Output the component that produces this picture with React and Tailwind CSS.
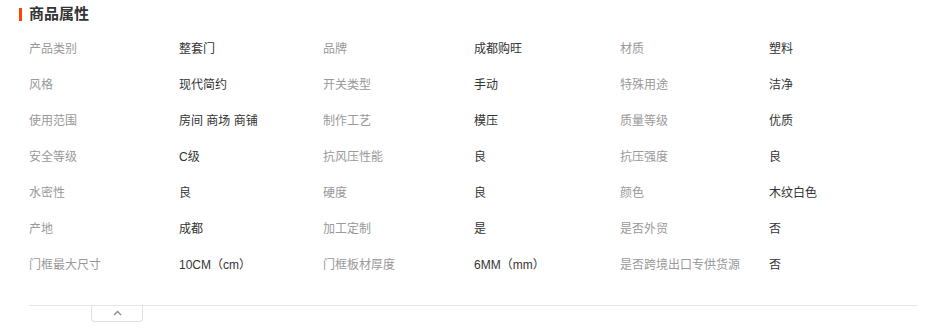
const rows = [
  ["产品类别", "整套门", "品牌", "成都购旺", "材质", "塑料"],
  ["风格", "现代简约", "开关类型", "手动", "特殊用途", "洁净"],
  ["使用范围", "房间 商场 商铺", "制作工艺", "模压", "质量等级", "优质"],
  ["安全等级", "C级", "抗风压性能", "良", "抗压强度", "良"],
  ["水密性", "良", "硬度", "良", "颜色", "木纹白色"],
  ["产地", "成都", "加工定制", "是", "是否外贸", "否"],
  ["门框最大尺寸", "10CM（cm）", "门框板材厚度", "6MM（mm）", "是否跨境出口专供货源", "否"],
]

export default function App() {
  return (
    <div
      className="w-[928px] h-[334px] bg-white overflow-hidden"
      style={{ fontFamily: '"Liberation Sans", "Noto Sans CJK SC", sans-serif' }}
    >
      <div className="flex items-center h-[28px] pl-[19px]">
        <div className="w-[3px] h-[13px] bg-[#ff4400]" />
        <h2 className="ml-[7px] text-[15px] font-bold text-[#333] leading-[28px]">商品属性</h2>
      </div>

      <div className="pl-[29px] pt-[3px] grid grid-cols-[150px_144px_151px_146px_149px_1fr] text-[12px] leading-[36px]">
        {rows.map((r, i) =>
          r.map((t, j) => (
            <div
              key={i + "-" + j}
              className={j % 2 === 0 ? "text-[#999] whitespace-nowrap" : "text-[#333] whitespace-nowrap"}
            >
              {t}
            </div>
          ))
        )}
      </div>

      <div className="mt-[22px] ml-[29px] w-[888px] border-t border-[#e5e5e5]">
        <div className="ml-[62px] w-[52px] h-[16px] border border-t-0 border-[#e0e0e0] rounded-b-[4px] flex justify-center pt-[4px]">
          <svg width="9" height="6" viewBox="0 0 9 6" fill="none">
            <path d="M1 5L4.5 1.5L8 5" stroke="#8a8a8a" strokeWidth="1.3" />
          </svg>
        </div>
      </div>
    </div>
  )
}
